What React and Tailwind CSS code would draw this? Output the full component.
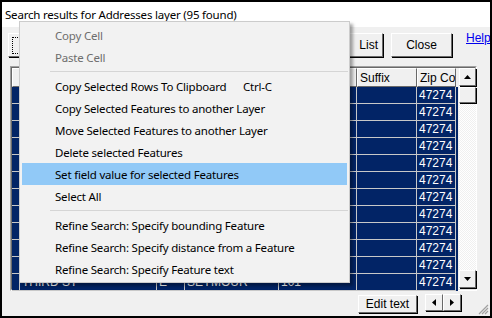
import React from "react";

const NAVY = "bg-[#022466]";

function Btn({ className = "", children }) {
  return (
    <div
      className={
        "shrink-0 flex items-center justify-center bg-[#f0f0f0] border border-t-white border-l-white border-r-[#696969] border-b-[#696969] shadow-[1px_1px_0_#000] text-black " +
        className
      }
    >
      {children}
    </div>
  );
}

const rows = Array.from({ length: 12 });
const widths = [8, 137, 28, 94, 78, 60, 39];

function MenuItem({ children, disabled, active, shortcut }) {
  return (
    <div
      className={
        "h-[22px] mx-[2px] flex items-center pl-[33px] pt-[1px] " +
        (active ? "bg-[#91c9f7] " : "") +
        (disabled ? "text-[#6d6d6d]" : "text-black")
      }
    >
      <span className="w-[188px] shrink-0 whitespace-nowrap">{children}</span>
      {shortcut && <span className="shrink-0 whitespace-nowrap">{shortcut}</span>}
    </div>
  );
}

function Sep() {
  return (
    <div className="h-[7px] flex items-center pl-[30px] pr-[1px]">
      <div className="h-px w-full bg-[#d5d5d5]" />
    </div>
  );
}

export default function App() {
  const ui = { fontFamily: '"Noto Sans", "Segoe UI", sans-serif' };
  const ms = { fontFamily: '"Liberation Sans", Arial, sans-serif' };
  return (
    <div className="w-[492px] h-[318px] border-2 border-black bg-[#f0f0f0] relative overflow-hidden">
      {/* title */}
      <div
        className="h-[25px] bg-white flex items-center pl-[3px] pt-[1px] text-[11.5px] tracking-[-0.2px] text-black"
        style={ui}
      >
        Search results for Addresses layer (95 found)
      </div>

      {/* toolbar */}
      <div className="h-[39px] flex items-start pt-[6px] text-[11px]" style={ms}>
        <Btn className="ml-[6px] w-[60px] h-[24px]">
          <div className="w-[52px] h-[17px] border border-dotted border-black" />
        </Btn>
        <Btn className="ml-[280px] w-[35px] h-[24px] justify-end pr-[4px] text-[12px]">List</Btn>
        <Btn className="ml-[8px] w-[61px] h-[24px] text-[12px]">Close</Btn>
        <a className="shrink-0 ml-[14px] -mt-[4px] text-[12px] text-[#0000ee] underline">Help</a>
      </div>

      {/* grid */}
      <div className="ml-[8px] w-[467px] h-[225px] border border-t-[#a0a0a0] border-l-[#a0a0a0] border-r-white border-b-white">
        <div className="w-full h-full border border-t-[#696969] border-l-[#696969] border-r-[#e3e3e3] border-b-[#e3e3e3] flex bg-[#f0f0f0]">
          <div className="w-[446px] shrink-0 flex flex-col text-[12px]" style={ms}>
            {/* header */}
            <div className="h-[19px] flex bg-[#f0f0f0]">
              {["", "", "", "", "", "Suffix", "Zip Coc"].map((t, i) => (
                <div
                  key={i}
                  style={{ width: widths[i] }}
                  className="shrink-0 h-full border border-t-white border-l-white border-r-[#696969] border-b-[#696969] pl-[2px] flex items-center overflow-hidden whitespace-nowrap"
                >
                  {t}
                </div>
              ))}
            </div>
            {rows.map((_, i) => (
              <div key={i} className={"h-[17px] flex text-white " + NAVY}>
                {widths.map((w, j) => (
                  <div
                    key={j}
                    style={{ width: w }}
                    className="shrink-0 h-full border-r border-b border-[#c8c8c8] pl-[2px] flex items-center overflow-hidden whitespace-nowrap"
                  >
                    {j === 6
                      ? "47274"
                      : i === 11
                      ? ["", "THIRD ST", "E", "SEYMOUR", "101", "", ""][j]
                      : ""}
                  </div>
                ))}
              </div>
            ))}
          </div>
          {/* scrollbar */}
          <div className="w-[17px] ml-[1px] shrink-0 flex flex-col bg-[repeating-conic-gradient(#f0f0f0_0_25%,#ffffff_0_50%)] bg-[length:2px_2px]">
            <Btn className="h-[18px] w-[17px]">
              <svg width="7" height="4" viewBox="0 0 7 4"><path d="M3.5 0 L7 4 L0 4Z" fill="#000" /></svg>
            </Btn>
            <Btn className="h-[16px] w-[17px] mt-[1px]" />
            <div className="flex-1" />
            <Btn className="h-[18px] w-[17px] mb-[1px]">
              <svg width="7" height="4" viewBox="0 0 7 4"><path d="M0 0 L7 0 L3.5 4Z" fill="#000" /></svg>
            </Btn>
          </div>
        </div>
      </div>

      {/* bottom */}
      <div className="flex items-start pt-[3px] text-[12px]" style={ms}>
        <Btn className="ml-[356px] w-[59px] h-[18px] mt-[1px]">Edit text</Btn>
        <Btn className="ml-[8px] w-[18px] h-[17px]">
          <svg width="4" height="7" viewBox="0 0 4 7"><path d="M4 0 L4 7 L0 3.5Z" fill="#000" /></svg>
        </Btn>
        <Btn className="w-[18px] h-[17px]">
          <svg width="4" height="7" viewBox="0 0 4 7"><path d="M0 0 L0 7 L4 3.5Z" fill="#000" /></svg>
        </Btn>
      </div>
      <svg className="absolute right-[1px] bottom-[1px]" width="11" height="11" viewBox="0 0 11 11">
        <path d="M10 1 L1 10 M10 4 L4 10 M10 7 L7 10" stroke="#a0a0a0" strokeWidth="1.2" />
      </svg>

      {/* context menu */}
      <div
        className="absolute left-[17px] top-[19px] w-[331px] h-[262px] bg-[#f2f2f2] border border-[#cccccc] shadow-[3px_3px_3px_rgba(0,0,0,0.35)] py-[2px] text-[11.5px] tracking-[-0.2px]"
        style={ui}
      >
        <MenuItem disabled>Copy Cell</MenuItem>
        <MenuItem disabled>Paste Cell</MenuItem>
        <Sep />
        <MenuItem shortcut="Ctrl-C">Copy Selected Rows To Clipboard</MenuItem>
        <MenuItem>Copy Selected Features to another Layer</MenuItem>
        <MenuItem>Move Selected Features to another Layer</MenuItem>
        <MenuItem>Delete selected Features</MenuItem>
        <MenuItem active>Set field value for selected Features</MenuItem>
        <MenuItem>Select All</MenuItem>
        <Sep />
        <MenuItem>Refine Search: Specify bounding Feature</MenuItem>
        <MenuItem>Refine Search: Specify distance from a Feature</MenuItem>
        <MenuItem>Refine Search: Specify Feature text</MenuItem>
      </div>
    </div>
  );
}
